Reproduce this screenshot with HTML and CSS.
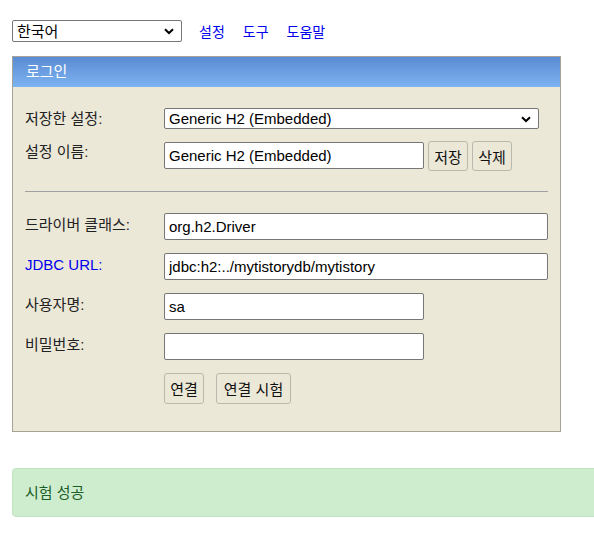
FILE: index.html
```html
<!DOCTYPE html>
<html lang="ko">
<head>
<meta charset="utf-8">
<title>H2 Console</title>
<link rel="stylesheet" href="styles.css">
</head>
<body>
<div class="topbar">
  <span class="select-wrap lang">
    <select class="sel"><option>한국어</option></select>
    <svg class="chev" width="10" height="7" viewBox="0 0 10 7"><path d="M1 1.2 L5 5 L9 1.2" fill="none" stroke="#000" stroke-width="2"/></svg>
  </span>
  <a class="toplink" href="#">설정</a>
  <a class="toplink" href="#">도구</a>
  <a class="toplink" href="#">도움말</a>
</div>

<div class="login">
  <div class="login-head">로그인</div>
  <div class="login-body">
    <div class="row r-saved">
      <label class="lbl">저장한 설정:</label>
      <span class="select-wrap saved">
        <select class="sel"><option>Generic H2 (Embedded)</option></select>
        <svg class="chev" width="10" height="7" viewBox="0 0 10 7"><path d="M1 1.2 L5 5 L9 1.2" fill="none" stroke="#000" stroke-width="2"/></svg>
      </span>
    </div>
    <div class="row r-name">
      <label class="lbl">설정 이름:</label>
      <input class="inp short" value="Generic H2 (Embedded)">
      <button class="btn b-save">저장</button>
      <button class="btn b-del">삭제</button>
    </div>
    <hr class="sep">
    <div class="row r-field">
      <label class="lbl">드라이버 클래스:</label>
      <input class="inp long" value="org.h2.Driver">
    </div>
    <div class="row r-field">
      <label class="lbl link-lbl">JDBC URL:</label>
      <input class="inp long" value="jdbc:h2:../mytistorydb/mytistory">
    </div>
    <div class="row r-field">
      <label class="lbl">사용자명:</label>
      <input class="inp short" value="sa">
    </div>
    <div class="row r-field">
      <label class="lbl">비밀번호:</label>
      <input class="inp short" type="password" value="">
    </div>
    <div class="row r-buttons">
      <span class="lbl"></span>
      <button class="btn b-connect">연결</button>
      <button class="btn b-test">연결 시험</button>
    </div>
  </div>
</div>

<div class="alert">시험 성공</div>
</body>
</html>
```
FILE: styles.css
```css
html { overflow: hidden; }
body {
  margin: 0;
  padding: 20px 0 0 12px;
  font-family: "Liberation Sans", "Noto Sans CJK KR", sans-serif;
  font-size: 14px;
  color: #000;
  background: #fff;
}
.topbar {
  display: flex;
  align-items: center;
  height: 22px;
}
.select-wrap {
  position: relative;
  display: inline-block;
}
.sel {
  appearance: none;
  -webkit-appearance: none;
  box-sizing: border-box;
  width: 100%;
  height: 100%;
  margin: 0;
  border: 1px solid #767676;
  border-radius: 2px;
  background: #fff;
  font-family: "Liberation Sans", "Noto Sans CJK KR", sans-serif;
  font-size: 15px;
  color: #000;
  padding: 0 0 0 4px;
}
.chev {
  position: absolute;
  right: 8px;
  top: 50%;
  margin-top: -3px;
}
.lang { width: 170px; height: 22px; }
.toplink {
  color: #0000ee;
  text-decoration: none;
  font-size: 14px;
  margin-left: 17px;
}
.toplink + .toplink { margin-left: 18px; }

.login {
  box-sizing: border-box;
  width: 549px;
  margin-top: 14px;
  border: 1px solid #a6a396;
  background: #ece8d8;
}
.login-head {
  height: 30px;
  line-height: 30px;
  padding-left: 13px;
  color: #fff;
  font-size: 15px;
  background: linear-gradient(to bottom, #5b8bd3, #7cb3f1);
}
.login-body {
  padding: 21px 12px 27px 12px;
}
.row {
  display: flex;
  align-items: flex-start;
}
.lbl {
  display: block;
  flex: 0 0 139px;
  width: 139px;
  font-size: 15px;
  line-height: 20px;
  color: #222;
}
.link-lbl { color: #0000ee; }
.r-saved { height: 21px; }
.r-saved .lbl { line-height: 21px; }
.saved { width: 375px; height: 21px; }
.r-name { margin-top: 12px; }
.r-name .lbl { padding-top: 1px; }
.inp {
  box-sizing: border-box;
  height: 27px;
  margin: 0;
  border: 1px solid #767676;
  border-radius: 2px;
  background: #fff;
  font-family: "Liberation Sans", "Noto Sans CJK KR", sans-serif;
  font-size: 15px;
  color: #000;
  padding: 0 4px;
}
.r-name .inp { margin-top: 1px; }
.short { width: 260px; }
.long { width: 385px; }
.btn {
  box-sizing: border-box;
  height: 30px;
  margin: 0;
  padding: 0;
  border: 1px solid #bab8ad;
  border-radius: 3px;
  background: transparent;
  font-family: "Liberation Sans", "Noto Sans CJK KR", sans-serif;
  font-size: 15px;
  color: #111;
}
.b-save { width: 40px; margin-left: 4px; }
.b-del { width: 40px; margin-left: 4px; }
.sep {
  margin: 20px 0 0 0;
  border: 0;
  border-top: 1px solid #a0a0a0;
  height: 0;
}
.r-field { margin-top: 13px; }
.r-field .lbl { padding-top: 2px; }
.sep + .r-field { margin-top: 21px; }
.r-buttons { margin-top: 13px; }
.b-connect { width: 40px; height: 31px; }
.b-test { width: 75px; height: 31px; margin-left: 12px; }

.alert {
  box-sizing: border-box;
  width: 600px;
  margin-top: 36px;
  height: 49px;
  line-height: 47px;
  padding-left: 12px;
  background: #ceedcf;
  border: 1px solid #bfe2c3;
  border-radius: 4px;
  color: #1b5e27;
  font-size: 15px;
}
```
